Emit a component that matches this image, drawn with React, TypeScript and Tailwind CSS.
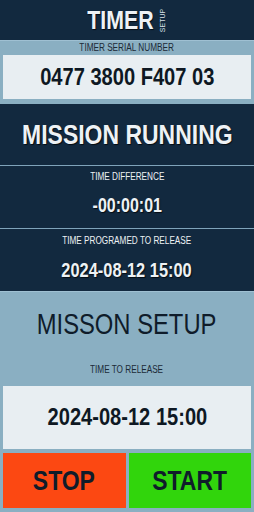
import React from "react";

const font = { fontFamily: '"Liberation Sans", Arial, sans-serif' };

function N({ children, className = "" }: { children: React.ReactNode; className?: string }) {
  return <span className={"inline-block whitespace-nowrap scale-x-[0.82] origin-center " + className}>{children}</span>;
}

export default function App() {
  return (
    <div className="w-[254px] h-[512px] flex flex-col overflow-hidden bg-[#8aafc2]" style={font}>
      {/* Header */}
      <div className="h-[40px] bg-[#12293f] flex items-center justify-center gap-[5px]">
        <div className="w-[66px] flex justify-center">
          <N className="text-[26px] leading-none font-bold text-[#eef2f5] [text-shadow:1px_1px_1px_rgba(0,0,0,0.7)]">
            TIMER
          </N>
        </div>
        <div className="w-[8px] h-[22px] flex items-center justify-center">
          <span className="text-[7px] leading-none text-[#d8e0e6] -rotate-90 inline-block whitespace-nowrap">
            SETUP
          </span>
        </div>
      </div>

      {/* Serial */}
      <div className="h-[64px] flex flex-col px-[3px] pb-[5px] border-t border-[#9fc0d2]">
        <div className="h-[14px] flex items-center justify-center text-[10px] leading-none text-[#1b2a37]">
          <N>TIMER SERIAL NUMBER</N>
        </div>
        <div className="h-[44px] bg-[#e8eef2] flex items-center justify-center text-[24.5px] leading-none font-bold text-[#0e1823]">
          <N>0477 3800 F407 03</N>
        </div>
      </div>

      {/* Mission running */}
      <div className="h-[187px] bg-[#12293f] flex flex-col text-[#eef2f5]">
        <div className="h-[61px] flex items-center justify-center text-[28px] leading-none font-bold [text-shadow:1px_1px_1px_rgba(0,0,0,0.7)]">
          <N>MISSION RUNNING</N>
        </div>
        <div className="h-[1px] bg-[#7fa3ba]" />
        <div className="h-[62px] flex flex-col">
          <div className="h-[22px] flex items-center justify-center text-[10px] leading-none">
            <N>TIME DIFFERENCE</N>
          </div>
          <div className="h-[36px] flex items-center justify-center text-[19.5px] leading-none font-bold [text-shadow:1px_1px_1px_rgba(0,0,0,0.7)]">
            <N>-00:00:01</N>
          </div>
        </div>
        <div className="h-[1px] bg-[#7fa3ba]" />
        <div className="h-[62px] flex flex-col">
          <div className="h-[23px] flex items-center justify-center text-[10px] leading-none">
            <N>TIME PROGRAMED TO RELEASE</N>
          </div>
          <div className="h-[36px] flex items-center justify-center text-[20px] leading-none font-bold [text-shadow:1px_1px_1px_rgba(0,0,0,0.7)]">
            <N>2024-08-12 15:00</N>
          </div>
        </div>
      </div>

      {/* Setup */}
      <div className="flex-1 flex flex-col border-t border-[#9fc0d2]">
        <div className="h-[65px] flex items-center justify-center text-[29px] leading-none text-[#0f1c2a]">
          <N>MISSON SETUP</N>
        </div>
        <div className="h-[26px] mb-[3px] flex items-center justify-center text-[10px] leading-none text-[#1b2a37]">
          <N>TIME TO RELEASE</N>
        </div>
        <div className="mx-[3px] h-[63px] bg-[#e8eef2] flex items-center justify-center text-[24.5px] leading-none font-bold text-[#0e1823]">
          <N>2024-08-12 15:00</N>
        </div>
        <div className="grid grid-cols-2 gap-[3px] px-[3px] mt-[4px] h-[55px]">
          <div className="bg-[#fc4812] flex items-center justify-center text-[28px] leading-none font-bold text-[#0f1c2a]">
            <N>STOP</N>
          </div>
          <div className="bg-[#31d50c] flex items-center justify-center text-[28px] leading-none font-bold text-[#0f1c2a]">
            <N>START</N>
          </div>
        </div>
      </div>
    </div>
  );
}
